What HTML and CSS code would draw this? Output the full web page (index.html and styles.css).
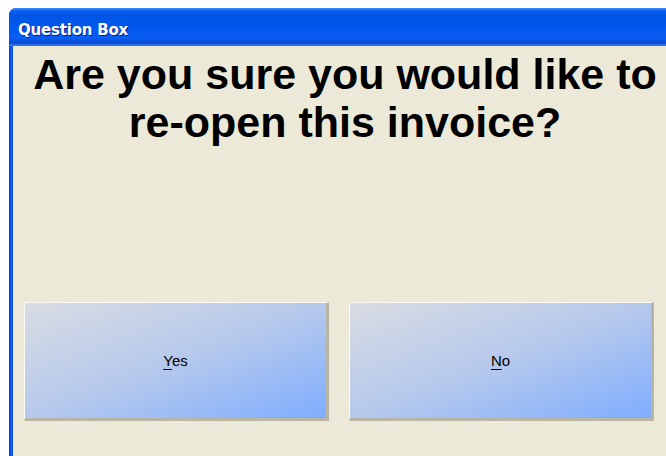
FILE: index.html
```html
<!DOCTYPE html>
<html>
<head>
<meta charset="utf-8">
<title>Question Box</title>
<link rel="stylesheet" href="styles.css">
</head>
<body>
<div class="window">
  <div class="titlebar"><span class="title">Question Box</span></div>
  <div class="client">
    <h1 class="question">Are you sure you would like to<br>re-open this invoice?</h1>
    <div class="actions">
      <button class="btn"><u>Y</u>es</button>
      <button class="btn"><u>N</u>o</button>
    </div>
  </div>
</div>
</body>
</html>
```

FILE: styles.css
```css
html, body {
  margin: 0;
  padding: 0;
  background: #ffffff;
  overflow: hidden;
}

.window {
  margin: 8px 0 0 9px;
  width: 690px;
  height: 460px;
  display: flex;
  flex-direction: column;
  background: linear-gradient(to right, #0831d9 0px, #1660f0 2px, #0a4ee4 4px);
  border-radius: 7px 7px 0 0;
  overflow: hidden;
}

.titlebar {
  height: 38px;
  flex: none;
  display: flex;
  align-items: flex-start;
  padding: 13px 0 0 9px;
  box-sizing: border-box;
  background: linear-gradient(to bottom,
    #3d8df8 0px, #0a5ef0 3px, #0055e6 8px, #0058ec 20px,
    #0a5df2 30px, #0849d4 35px, #2f74ee 37px, #2f74ee 38px);
}

.title {
  font-family: "DejaVu Sans", Verdana, sans-serif;
  font-weight: bold;
  font-size: 15px;
  line-height: 18px;
  color: #ffffff;
  text-shadow: 1px 1px 0 #0a1e8c;
  letter-spacing: -0.2px;
}

.client {
  flex: 1;
  margin-left: 4px;
  background: #ece9d8;
  display: flex;
  flex-direction: column;
}

.question {
  margin: 4px 0 0 0;
  width: 664px;
  text-align: center;
  font-family: "Liberation Sans", Arial, sans-serif;
  font-weight: bold;
  font-size: 43px;
  line-height: 48px;
  color: #000000;
}

.actions {
  margin-top: 156px;
  padding-left: 11px;
  display: flex;
  gap: 20px;
}

.btn {
  width: 305px;
  height: 119px;
  padding: 0;
  box-sizing: border-box;
  border-style: solid;
  border-width: 1px 3px 3px 1px;
  border-color: #fbfaf5 #b9b5a5 #b9b5a5 #fbfaf5;
  background: linear-gradient(to bottom right, #d9dce3 0%, #b6c9ec 50%, #7fadff 100%);
  font-family: "Liberation Sans", Arial, sans-serif;
  font-size: 15px;
  color: #000000;
}

.btn u {
  text-decoration-thickness: 1px;
  text-underline-offset: 3px;
}
```
